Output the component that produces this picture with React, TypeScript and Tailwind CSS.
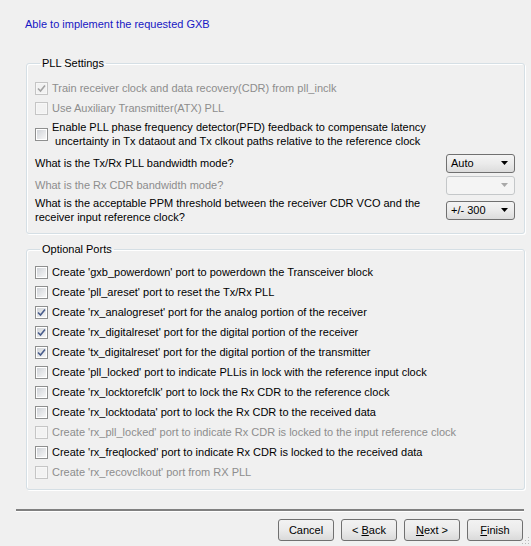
import { ReactNode } from "react";

// Types
type TPort = { label: string; checked?: boolean; disabled?: boolean };

// Constants
const optional_ports: TPort[] = [
  { label: "Create 'gxb_powerdown' port to powerdown the Transceiver block" },
  { label: "Create 'pll_areset' port to reset the Tx/Rx PLL" },
  { label: "Create 'rx_analogreset' port for the analog portion of the receiver", checked: true },
  { label: "Create 'rx_digitalreset' port for the digital portion of the receiver", checked: true },
  { label: "Create 'tx_digitalreset' port for the digital portion of the transmitter", checked: true },
  { label: "Create 'pll_locked' port to indicate PLLis in lock with the reference input clock" },
  { label: "Create 'rx_locktorefclk' port to lock the Rx CDR to the reference clock" },
  { label: "Create 'rx_locktodata' port to lock the Rx CDR to the received data" },
  { label: "Create 'rx_pll_locked' port to indicate Rx CDR is locked to the input reference clock", disabled: true },
  { label: "Create 'rx_freqlocked' port to indicate Rx CDR is locked to the received data" },
  { label: "Create 'rx_recovclkout' port from RX PLL", disabled: true },
];

function CheckBox({ checked, disabled }: { checked?: boolean; disabled?: boolean }) {
  return (
    <span
      className={`flex h-[13px] w-[13px] shrink-0 items-center justify-center border p-px ${
        disabled ? "border-[#c5c5c5] bg-[#f7f7f7]" : "border-[#8e8f8f] bg-white"
      }`}
    >
      <span
        className={`relative flex h-full w-full items-center justify-center ${
          disabled ? "bg-[#f2f2f2]" : "bg-gradient-to-br from-[#d0d3d8] to-[#f7f7f7]"
        }`}
      >
        {checked && (
          <svg width="11" height="11" viewBox="0 0 11 11" className="absolute">
            <path
              d="M2 5.5 L4.5 8 L9 2.5"
              fill="none"
              stroke={disabled ? "#a3a3a3" : "#4a5d8c"}
              strokeWidth="1.6"
            />
          </svg>
        )}
      </span>
    </span>
  );
}

function CheckRow({ label, checked, disabled }: TPort) {
  return (
    <div className="flex h-[20px] items-center gap-[4px]">
      <CheckBox checked={checked} disabled={disabled} />
      <span className={disabled ? "text-[#8d8d8d]" : "text-black"}>{label}</span>
    </div>
  );
}

function Select({ value, disabled }: { value?: string; disabled?: boolean }) {
  return (
    <div
      className={`flex h-[19px] w-[69px] shrink-0 items-center justify-between rounded-[3px] border pl-[4px] pr-[6px] ${
        disabled
          ? "border-[#c4c7c9] bg-[#f4f4f4]"
          : "border-[#707070] bg-gradient-to-b from-[#f4f4f4] via-[#ebebeb] to-[#dcdcdc]"
      }`}
    >
      <span>{value}</span>
      <svg width="7" height="4" viewBox="0 0 7 4">
        <path d="M0 0 H7 L3.5 4 Z" fill={disabled ? "#a8a8a8" : "#000"} />
      </svg>
    </div>
  );
}

function GroupBox({ title, children }: { title: string; children: ReactNode }) {
  return (
    <fieldset className="ml-[26px] w-[499px] rounded-[3px] border border-[#d5dfe5] shadow-[inset_1px_1px_0_#fff,1px_1px_0_#fff] pl-[8px] pr-[9px]">
      <legend className="ml-[5px] px-[2px] leading-[14px]">{title}</legend>
      {children}
    </fieldset>
  );
}

function Button({ children }: { children: ReactNode }) {
  return (
    <button className="flex h-[22px] w-[56px] items-center justify-center rounded-[3px] border border-[#707070] bg-gradient-to-b from-[#f2f2f2] via-[#ebebeb] to-[#dadada] text-black">
      {children}
    </button>
  );
}

export default function App() {
  return (
    <div className="relative flex h-[546px] w-[531px] flex-col overflow-hidden bg-[#f0f0f0] font-['Liberation_Sans',Arial,sans-serif] text-[11px] leading-[14px] text-black">
      {/* Status */}
      <p className="pl-[25px] pt-[17px] text-[#1717c4]">Able to implement the requested GXB</p>

      {/* PLL Settings */}
      <div className="mt-[25px]">
        <GroupBox title="PLL Settings">
          <div className="flex flex-col pb-[9px] pt-[8px]">
            <CheckRow label="Train receiver clock and data recovery(CDR) from pll_inclk" checked disabled />
            <CheckRow label="Use Auxiliary Transmitter(ATX) PLL" disabled />
            <div className="mt-[2px] flex h-[28px] items-center gap-[4px]">
              <CheckBox />
              <span>
                Enable PLL phase frequency detector(PFD) feedback to compensate latency
                <br />
                &nbsp;uncertainty in Tx dataout and Tx clkout paths relative to the reference clock
              </span>
            </div>
            <div className="mt-[4px] flex h-[22px] items-center justify-between">
              <span>What is the Tx/Rx PLL bandwidth mode?</span>
              <Select value="Auto" />
            </div>
            <div className="flex h-[22px] items-center justify-between">
              <span className="text-[#8d8d8d]">What is the Rx CDR bandwidth mode?</span>
              <Select disabled />
            </div>
            <div className="flex h-[28px] items-center justify-between">
              <span>
                What is the acceptable PPM threshold between the receiver CDR VCO and the
                <br />
                receiver input reference clock?
              </span>
              <Select value="+/- 300" />
            </div>
          </div>
        </GroupBox>
      </div>

      {/* Optional Ports */}
      <div className="mt-[8px]">
        <GroupBox title="Optional Ports">
          <div className="flex flex-col pb-[7px] pt-[6px]">
            {optional_ports.map((port: TPort, index: number) => (
              <CheckRow key={index} {...port} />
            ))}
          </div>
        </GroupBox>
      </div>

      {/* Separator */}
      <div className="ml-[16px] mt-[19px] w-[508px] border-b border-t-2 border-b-white border-t-[#808080]" />

      {/* Buttons */}
      <div className="mt-[7px] flex justify-end gap-[7px] pr-[8px]">
        <Button>Cancel</Button>
        <Button>
          &lt;&nbsp;<u>B</u>ack
        </Button>
        <Button>
          <u>N</u>ext &gt;
        </Button>
        <Button>
          <u>F</u>inish
        </Button>
      </div>

      {/* Size grip */}
      <svg width="10" height="10" viewBox="0 0 10 10" className="absolute bottom-[1px] right-[1px]">
        <rect x="8" y="2" width="1" height="1" fill="#b9b9b9" />
        <rect x="5" y="5" width="1" height="1" fill="#b9b9b9" />
        <rect x="8" y="5" width="1" height="1" fill="#b9b9b9" />
        <rect x="2" y="8" width="1" height="1" fill="#b9b9b9" />
        <rect x="5" y="8" width="1" height="1" fill="#b9b9b9" />
        <rect x="8" y="8" width="1" height="1" fill="#b9b9b9" />
      </svg>
    </div>
  );
}
